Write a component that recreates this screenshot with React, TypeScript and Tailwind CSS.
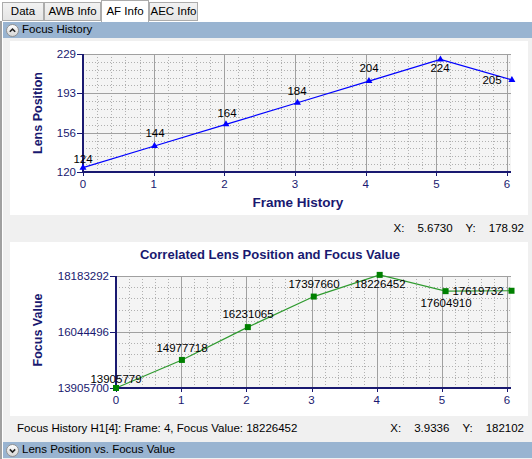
// AF Info tab: focus history charts with collapsible section headers.

import React from "react";

const FONT = '"Liberation Sans", Arial, sans-serif';
const NAVY = "#191970";

type Label = { text: string; x: number; y: number };

type ChartProps = {
  left: number;
  top: number;
  bottom: number;
  right: number;
  xStep: number;
  yMin: number;
  yMax: number;
  yTicks: { v: number; label: string }[];
  yLabelRight: number;
  xLabelY: number;
  values: number[];
  labels: Label[];
  color: string;
  marker: string;
  markerShape: "triangle" | "square";
  title?: string;
  xTitle?: string;
  yTitle: string;
  yTitleAt: [number, number];
};

function Chart(p: ChartProps) {
  const px = (x: number) => p.left + x * p.xStep;
  const py = (v: number) => p.bottom - ((v - p.yMin) / (p.yMax - p.yMin)) * (p.bottom - p.top);
  const crisp = (n: number) => Math.round(n) + 0.5;

  const minorX: number[] = [];
  for (let i = 0; i < 6; i++) for (let j = 1; j < 5; j++) minorX.push(px(i + j / 5));
  const minorY: number[] = [];
  for (let k = 0; k < p.yTicks.length - 1; k++) {
    const a = p.yTicks[k].v;
    const b = p.yTicks[k + 1].v;
    for (let j = 1; j < 5; j++) minorY.push(py(a + ((b - a) * j) / 5));
  }
  const pts = p.values.map((v, i) => [px(i * 1.0115), py(v)] as [number, number]);

  return (
    <svg width={518} height={174} className="block" style={{ fontFamily: FONT }}>
      <rect x={p.left} y={p.top} width={p.right - p.left} height={p.bottom - p.top} fill="#f4f4f4" />
      {minorX.map((x, i) => (
        <line key={"mx" + i} x1={crisp(x)} x2={crisp(x)} y1={p.top} y2={p.bottom} stroke="#b0b0b0" strokeDasharray="1 2" />
      ))}
      {minorY.map((y, i) => (
        <line key={"my" + i} x1={p.left} x2={p.right} y1={crisp(y)} y2={crisp(y)} stroke="#b0b0b0" strokeDasharray="1 2" />
      ))}
      {[1, 2, 3, 4, 5, 6].map((i) => (
        <line key={"gx" + i} x1={crisp(px(i))} x2={crisp(px(i))} y1={p.top} y2={p.bottom} stroke="#a0a0a0" />
      ))}
      {p.yTicks.slice(1).map((t, i) => (
        <line key={"gy" + i} x1={p.left} x2={p.right} y1={crisp(py(t.v))} y2={crisp(py(t.v))} stroke="#a0a0a0" />
      ))}

      <line x1={p.left} x2={p.left} y1={p.top} y2={p.bottom + 1} stroke={NAVY} strokeWidth={2} />
      <line x1={p.left} x2={p.right} y1={p.bottom} y2={p.bottom} stroke={NAVY} strokeWidth={2} />
      {p.yTicks.map((t, i) => (
        <g key={"yt" + i}>
          <line x1={p.left - 6} x2={p.left} y1={crisp(py(t.v))} y2={crisp(py(t.v))} stroke={NAVY} />
          <text x={p.yLabelRight} y={py(t.v) + 4} fontSize={11.5} fill={NAVY} textAnchor="end">
            {t.label}
          </text>
        </g>
      ))}
      {[0, 1, 2, 3, 4, 5, 6].map((i) => (
        <g key={"xt" + i}>
          <line x1={crisp(px(i))} x2={crisp(px(i))} y1={p.bottom} y2={p.bottom + 4} stroke={NAVY} />
          <text x={px(i)} y={p.xLabelY + 4} fontSize={11.5} fill={NAVY} textAnchor="middle">
            {i}
          </text>
        </g>
      ))}

      <polyline points={pts.map((q) => q.join(",")).join(" ")} fill="none" stroke={p.color} strokeWidth={1.2} />
      {pts.map(([x, y], i) =>
        p.markerShape === "triangle" ? (
          <polygon key={"m" + i} points={`${x},${y - 4} ${x - 3.5},${y + 2} ${x + 3.5},${y + 2}`} fill={p.marker} />
        ) : (
          <rect key={"m" + i} x={x - 3} y={y - 3} width={6} height={6} fill={p.marker} />
        )
      )}
      {p.labels.map((l, i) => (
        <text key={"l" + i} x={l.x} y={l.y + 4} fontSize={11.5} fill="#000" textAnchor="middle">
          {l.text}
        </text>
      ))}

      <text
        x={p.yTitleAt[0]}
        y={p.yTitleAt[1]}
        fontSize={12.5}
        fontWeight="bold"
        fill={NAVY}
        textAnchor="middle"
        transform={`rotate(-90 ${p.yTitleAt[0]} ${p.yTitleAt[1]})`}
        dominantBaseline="central"
      >
        {p.yTitle}
      </text>
      {p.xTitle && (
        <text x={288} y={161} fontSize={13.5} fontWeight="bold" fill={NAVY} textAnchor="middle" dominantBaseline="central">
          {p.xTitle}
        </text>
      )}
      {p.title && (
        <text x={260} y={12} fontSize={13} fontWeight="bold" fill={NAVY} textAnchor="middle" dominantBaseline="central">
          {p.title}
        </text>
      )}
    </svg>
  );
}

function Chevron({ up }: { up: boolean }) {
  return (
    <svg width={13} height={13} viewBox="0 0 13 13">
      <defs>
        <linearGradient id={up ? "gu" : "gd"} x1="0" y1="0" x2="0" y2="1">
          <stop offset="0" stopColor="#ffffff" />
          <stop offset="1" stopColor="#d4d4d4" />
        </linearGradient>
      </defs>
      <circle cx={6.5} cy={6.5} r={6} fill={`url(#${up ? "gu" : "gd"})`} stroke="#8e8f8f" />
      <path
        d={up ? "M3.8 7.8 L6.5 5.1 L9.2 7.8" : "M3.8 5.4 L6.5 8.1 L9.2 5.4"}
        fill="none"
        stroke="#222"
        strokeWidth={1.5}
      />
    </svg>
  );
}

function SectionHeader({ title, up }: { title: string; up: boolean }) {
  return (
    <div className="flex h-[16px] shrink-0 items-center gap-[3px] bg-[#99b4d1] pl-[3px] text-[11.5px] text-black">
      <Chevron up={up} />
      <span>{title}</span>
    </div>
  );
}

function Tab({ label, active, width }: { label: string; active?: boolean; width: string }) {
  return active ? (
    <div className={`${width} relative z-10 -mb-px flex h-[22px] items-start justify-center border border-b-0 border-[#acacac] bg-white pt-[2px]`}>
      {label}
    </div>
  ) : (
    <div className={`${width} flex h-[19px] items-center justify-center border border-[#acacac] bg-gradient-to-b from-[#f2f2f2] to-[#e5e5e5]`}>
      {label}
    </div>
  );
}

export default function App() {
  return (
    <div className="flex h-[459px] w-[532px] flex-col overflow-hidden bg-white text-[11.5px] text-black" style={{ fontFamily: FONT }}>
      {/* Tab strip */}
      <div className="flex h-[21px] shrink-0 items-end pl-[2px]">
        <Tab label="Data" width="w-[42px]" />
        <Tab label="AWB Info" width="w-[57px]" />
        <Tab label="AF Info" width="w-[48px]" active />
        <Tab label="AEC Info" width="w-[49px]" />
      </div>

      {/* Tab page */}
      <div className="flex flex-1 flex-col border-l-2 border-[#a0a0a0] bg-white pt-px pl-px">
        <div className="flex flex-1 flex-col bg-[#f0f0f0]">
          <SectionHeader title="Focus History" up />
          <div className="h-[3px] shrink-0" />

          <div className="ml-[7px] w-[518px] shrink-0 bg-white">
            <Chart
              left={73}
              top={13}
              bottom={131}
              right={501}
              xStep={70.67}
              yMin={120}
              yMax={229}
              yTicks={[
                { v: 120, label: "120" },
                { v: 156.33, label: "156" },
                { v: 192.67, label: "193" },
                { v: 229, label: "229" },
              ]}
              yLabelRight={66}
              xLabelY={143}
              values={[124, 144, 164, 184, 204, 224, 205]}
              labels={[
                { text: "124", x: 73, y: 118 },
                { text: "144", x: 145, y: 92 },
                { text: "164", x: 217, y: 72 },
                { text: "184", x: 287, y: 50 },
                { text: "204", x: 359, y: 27 },
                { text: "224", x: 430, y: 27 },
                { text: "205", x: 482, y: 39 },
              ]}
              color="#0000ff"
              marker="#0000ff"
              markerShape="triangle"
              xTitle="Frame History"
              yTitle="Lens Position"
              yTitleAt={[28, 72]}
            />
          </div>

          <div className="flex h-[27px] shrink-0 items-center justify-end pr-[8px]">
            <span>X:</span>
            <span className="ml-[13px]">5.6730</span>
            <span className="ml-[13px]">Y:</span>
            <span className="ml-[13px]">178.92</span>
          </div>

          <div className="ml-[7px] w-[518px] shrink-0 bg-white">
            <Chart
              left={106}
              top={34}
              bottom={146}
              right={501}
              xStep={65.17}
              yMin={13905700}
              yMax={18183292}
              yTicks={[
                { v: 13905700, label: "13905700" },
                { v: 16044496, label: "16044496" },
                { v: 18183292, label: "18183292" },
              ]}
              yLabelRight={99}
              xLabelY={158}
              values={[13905779, 14977718, 16231065, 17397660, 18226452, 17604910, 17619732]}
              labels={[
                { text: "13905779", x: 106, y: 137 },
                { text: "14977718", x: 172, y: 106 },
                { text: "16231065", x: 238, y: 72 },
                { text: "17397660", x: 304, y: 42 },
                { text: "18226452", x: 370, y: 42 },
                { text: "17604910", x: 436, y: 61 },
                { text: "17619732", x: 468, y: 49 },
              ]}
              color="#2f9a2f"
              marker="#008000"
              markerShape="square"
              title="Correlated Lens Position and Focus Value"
              yTitle="Focus Value"
              yTitleAt={[28, 88]}
            />
          </div>

          <div className="flex h-[26px] shrink-0 items-center pl-[14px] pr-[8px]">
            <span>Focus History H1[4]: Frame: 4, Focus Value: 18226452</span>
            <span className="ml-auto">X:</span>
            <span className="ml-[13px]">3.9336</span>
            <span className="ml-[13px]">Y:</span>
            <span className="ml-[13px]">182102</span>
          </div>

          <SectionHeader title="Lens Position vs. Focus Value" up={false} />
        </div>
      </div>
    </div>
  );
}
